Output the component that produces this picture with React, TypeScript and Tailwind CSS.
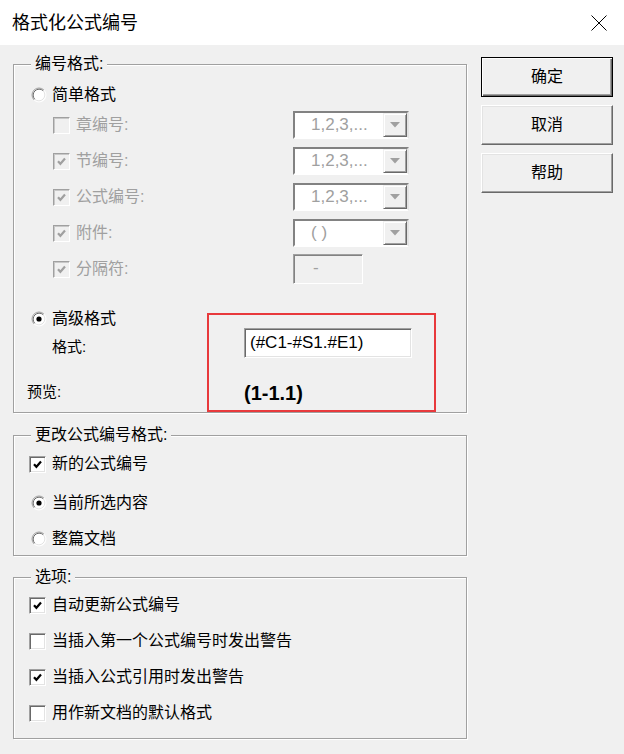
import React from 'react';

const FONT = "font-['Liberation_Sans','Noto_Sans_CJK_SC',sans-serif]";

const CheckBox: React.FC<{ checked?: boolean; disabled?: boolean }> = ({ checked, disabled }) => (
  <span
    className={`flex items-center justify-center w-[17px] h-[17px] shrink-0 border border-t-[#a0a0a0] border-l-[#a0a0a0] border-r-white border-b-white ${
      disabled
        ? 'bg-[#f0f0f0] shadow-[inset_1px_1px_0_#c8c8c8]'
        : 'bg-white shadow-[inset_1px_1px_0_#696969,inset_-1px_-1px_0_#e3e3e3]'
    }`}
  >
    {checked && (
      <svg width="11" height="11" viewBox="0 0 11 11">
        <path d="M2 5.2 L4.4 7.8 L9 2.6" stroke={disabled ? '#a0a0a0' : '#000'} strokeWidth="2.2" fill="none" />
      </svg>
    )}
  </span>
);

const Radio: React.FC<{ checked?: boolean }> = ({ checked }) => (
  <svg width="16" height="16" viewBox="0 0 16 16" className="shrink-0">
    <circle cx="8" cy="8" r="7" fill="#fff" />
    <path d="M3.05 12.95 A7 7 0 0 1 12.95 3.05" stroke="#a0a0a0" fill="none" />
    <path d="M12.95 3.05 A7 7 0 0 1 3.05 12.95" stroke="#fff" fill="none" />
    <path d="M3.76 12.24 A6 6 0 0 1 12.24 3.76" stroke="#696969" fill="none" />
    <path d="M12.24 3.76 A6 6 0 0 1 3.76 12.24" stroke="#e3e3e3" fill="none" />
    {checked && <circle cx="8" cy="8" r="2.6" fill="#000" />}
  </svg>
);

const Combo: React.FC<{ value: string }> = ({ value }) => (
  <div className="flex w-[116px] h-[28px] border-2 border-t-[#828282] border-l-[#828282] border-r-[#e3e3e3] border-b-white bg-white">
    <span className="flex-1 pl-[16px] text-[17px] leading-[24px] text-[#a0a0a0]">{value}</span>
    <span className="flex items-center justify-center w-[24px] h-full bg-[#f0f0f0] border border-t-[#f0f0f0] border-l-[#f0f0f0] border-r-[#696969] border-b-[#696969] shadow-[inset_1px_1px_0_white,inset_-1px_-1px_0_#a0a0a0]">
      <svg width="10" height="6" viewBox="0 0 10 6">
        <path d="M0 0 H10 L5 5.5 Z" fill="#a0a0a0" />
      </svg>
    </span>
  </div>
);

const Group: React.FC<{ label: string; labelLeft: string; className: string; children: React.ReactNode }> = ({
  label,
  labelLeft,
  className,
  children,
}) => (
  <div className={`relative border border-[#a0a0a0] shadow-[inset_1px_1px_0_white,1px_1px_0_white] ${className}`}>
    <span className={`absolute -top-[11px] ${labelLeft} px-[4px] h-[20px] leading-[20px] bg-[#f0f0f0] text-[16px] text-black`}>
      {label}
    </span>
    {children}
  </div>
);

const simpleRows = [
  { label: '章编号:', checked: false, value: '1,2,3,...' },
  { label: '节编号:', checked: true, value: '1,2,3,...' },
  { label: '公式编号:', checked: true, value: '1,2,3,...' },
  { label: '附件:', checked: true, value: '( )' },
];

const options = [
  { label: '自动更新公式编号', checked: true },
  { label: '当插入第一个公式编号时发出警告', checked: false },
  { label: '当插入公式引用时发出警告', checked: true },
  { label: '用作新文档的默认格式', checked: false },
];

const App: React.FC = () => {
  return (
    <div className={`w-[624px] h-[754px] flex flex-col bg-[#f0f0f0] text-black ${FONT}`}>
      <header className="flex items-center justify-between h-[45px] bg-white pl-[12px] pr-[17px]">
        <h1 className="text-[18px] leading-[24px]">格式化公式编号</h1>
        <svg width="16" height="16" viewBox="0 0 16 16">
          <path d="M0.5 0.5 L15.5 15.5 M15.5 0.5 L0.5 15.5" stroke="#000" strokeWidth="1" />
        </svg>
      </header>

      <div className="flex">
        <div className="ml-[13px] w-[454px] flex flex-col">
          <Group label="编号格式:" labelLeft="left-[17px]" className="mt-[19px] h-[349px]">
            <div className="flex items-center h-[24px] mt-[18px] pl-[17px] gap-[5px] text-[16px]">
              <Radio />
              <span>简单格式</span>
            </div>
            {simpleRows.map((r) => (
              <div key={r.label} className="flex items-center h-[36px] pl-[39px]">
                <div className="flex items-center w-[240px] gap-[6px]">
                  <CheckBox checked={r.checked} disabled />
                  <span className="text-[16px] text-[#a0a0a0]">{r.label}</span>
                </div>
                <Combo value={r.value} />
              </div>
            ))}
            <div className="flex items-center h-[36px] pl-[39px]">
              <div className="flex items-center w-[240px] gap-[6px]">
                <CheckBox checked disabled />
                <span className="text-[16px] text-[#a0a0a0]">分隔符:</span>
              </div>
              <div className="w-[70px] h-[30px] border border-t-[#a0a0a0] border-l-[#a0a0a0] border-r-white border-b-white shadow-[inset_1px_1px_0_#828282] pl-[19px] text-[17px] leading-[26px] text-[#a0a0a0]">
                -
              </div>
            </div>

            <div className="flex items-center h-[24px] mt-[20px] pl-[17px] gap-[5px] text-[16px]">
              <Radio checked />
              <span>高级格式</span>
            </div>
            <div className="flex items-start h-[30px] -mt-[3px]">
              <span className="w-[230px] pl-[38px] pt-[8px] text-[15px] leading-[22px]">格式:</span>
              <div className="w-[168px] h-[30px] bg-white border border-t-[#a0a0a0] border-l-[#a0a0a0] border-r-white border-b-white shadow-[inset_1px_1px_0_#696969,inset_-1px_-1px_0_#e3e3e3] pl-[5px] text-[17px] leading-[27px]">
                (#C1-#S1.#E1)
              </div>
            </div>
            <div className="flex items-center h-[28px] mt-[20px]">
              <span className="w-[230px] pl-[13px] text-[15px]">预览:</span>
              <span className="text-[20px] font-bold leading-[28px] pt-[2px]">(1-1.1)</span>
            </div>

            <div className="absolute left-[193px] top-[248px] w-[229px] h-[99px] border-2 border-[#e8393c]" />
          </Group>

          <Group label="更改公式编号格式:" labelLeft="left-[17px]" className="mt-[22px] h-[121px]">
            <div className="flex items-center h-[24px] mt-[16px] pl-[15px] gap-[6px] text-[16px]">
              <CheckBox checked />
              <span>新的公式编号</span>
            </div>
            <div className="flex items-center h-[24px] mt-[15px] pl-[17px] gap-[5px] text-[16px]">
              <Radio checked />
              <span>当前所选内容</span>
            </div>
            <div className="flex items-center h-[24px] mt-[12px] pl-[17px] gap-[5px] text-[16px]">
              <Radio />
              <span>整篇文档</span>
            </div>
          </Group>

          <Group label="选项:" labelLeft="left-[17px]" className="mt-[21px] h-[162px] pt-[9px]">
            {options.map((o) => (
              <div key={o.label} className="flex items-center h-[36px] pl-[15px] gap-[6px] text-[16px]">
                <CheckBox checked={o.checked} />
                <span>{o.label}</span>
              </div>
            ))}
          </Group>
        </div>

        <div className="ml-[14px] mt-[12px] flex flex-col gap-[8px] w-[132px]">
          <button className="h-[40px] bg-[#f0f0f0] border border-black shadow-[inset_1px_1px_0_white,inset_-1px_-1px_0_#696969,inset_-2px_-2px_0_#a0a0a0] text-[16px]">
            确定
          </button>
          <button className="h-[40px] bg-[#f0f0f0] border border-t-white border-l-white border-r-[#696969] border-b-[#696969] shadow-[inset_-1px_-1px_0_#a0a0a0,inset_1px_1px_0_#e3e3e3] text-[16px]">
            取消
          </button>
          <button className="h-[40px] bg-[#f0f0f0] border border-t-white border-l-white border-r-[#696969] border-b-[#696969] shadow-[inset_-1px_-1px_0_#a0a0a0,inset_1px_1px_0_#e3e3e3] text-[16px]">
            帮助
          </button>
        </div>
      </div>
    </div>
  );
};

export default App;
